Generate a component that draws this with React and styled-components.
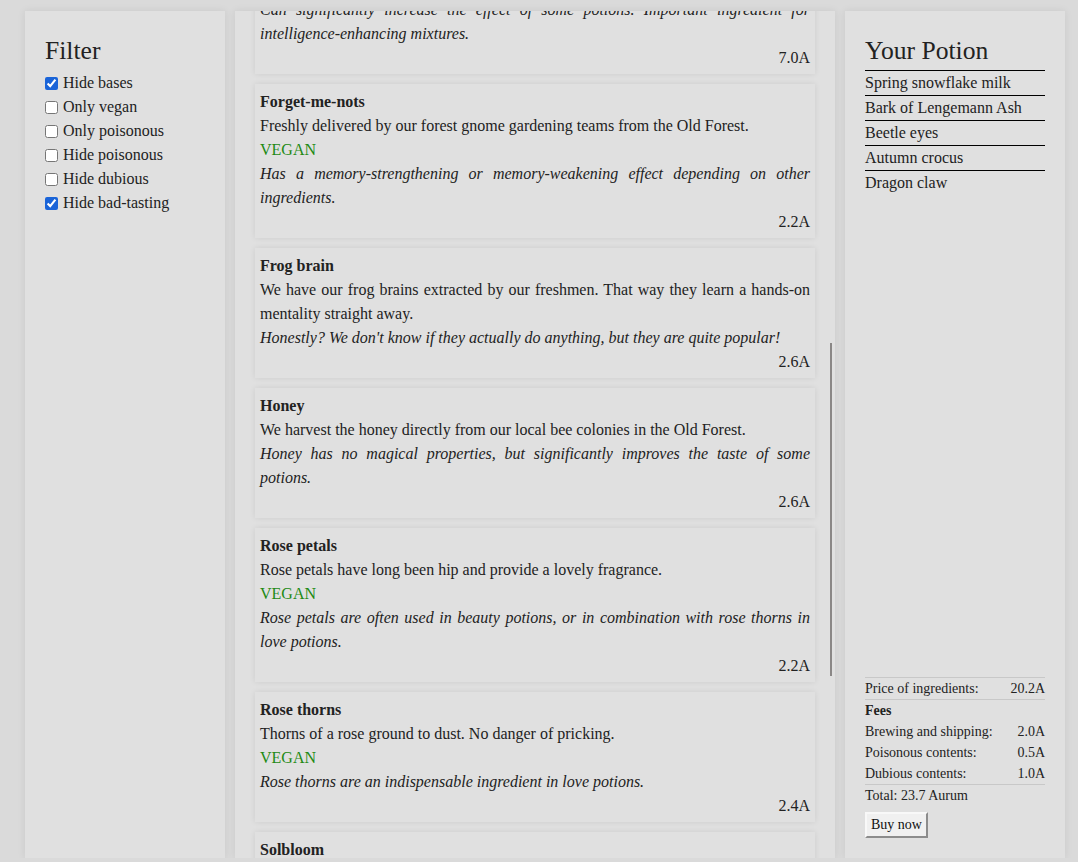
import React, { useLayoutEffect, useRef } from 'react'
import styled, { createGlobalStyle } from 'styled-components'

const GlobalStyle = createGlobalStyle`
  html, body {
    margin: 0;
    background: #dadada;
    font-family: "Liberation Serif", "Times New Roman", serif;
    color: #222;
  }
`

const Page = styled.div`
  display: grid;
  grid-template-columns: 200px 600px 220px;
  column-gap: 10px;
  padding: 11px 0 0 25px;
  height: 847px;
`
const Panel = styled.div`
  background: #e0e0e0;
  box-shadow: 0 0 8px rgba(0, 0, 0, 0.08);
  padding: 20px;
  box-sizing: border-box;
  height: 847px;
  display: flex;
  flex-direction: column;
`
const Heading = styled.h2`
  font-size: 25.6px;
  font-weight: normal;
  line-height: 30px;
  margin: 5px 0 4px 0;
`
const FilterList = styled.div`
  display: flex;
  flex-direction: column;
  padding-top: 1px;
`
const FilterLabel = styled.label`
  display: flex;
  align-items: center;
  font-size: 16px;
  line-height: 24px;

  input {
    width: 13px;
    height: 13px;
    margin: 0 5px 0 0;
    accent-color: #1a64d8;
  }
`

const ListPanel = styled.div`
  position: relative;
  background: #e0e0e0;
  box-shadow: 0 0 8px rgba(0, 0, 0, 0.08);
  height: 847px;
  overflow: hidden;
`
const Scroller = styled.div`
  height: 100%;
  overflow-y: scroll;
  scrollbar-width: none;
  padding: 10px 20px;
  box-sizing: border-box;
  display: flex;
  flex-direction: column;
  gap: 10px;

  &::-webkit-scrollbar {
    display: none;
  }
`
const ScrollThumb = styled.div`
  position: absolute;
  right: 3px;
  top: 332px;
  width: 2px;
  height: 333px;
  background: #8a8786;
`
const Card = styled.div`
  background: #e0e0e0;
  box-shadow: 0 0 6px rgba(0, 0, 0, 0.09);
  padding: 6px 5px 4px 5px;
  font-size: 16px;
  line-height: 24px;
  flex-shrink: 0;
`
const CardTitle = styled.div`
  font-weight: bold;
`
const CardText = styled.div`
  text-align: justify;
  font-style: ${(p) => (p.italic ? 'italic' : 'normal')};
`
const Vegan = styled.div`
  color: #1d8a14;
`
const Price = styled.div`
  text-align: right;
`

const PotionList = styled.div`
  display: flex;
  flex-direction: column;
`
const PotionItem = styled.div`
  font-size: 16px;
  line-height: 24px;
  border-top: 1px solid #000;
`
const Summary = styled.div`
  margin-top: auto;
  font-size: 14px;
  line-height: 21px;
`
const SummaryRow = styled.div`
  display: flex;
  justify-content: space-between;
  border-top: ${(p) => (p.divided ? '1px solid #c8c8c8' : 'none')};
  font-weight: ${(p) => (p.bold ? 'bold' : 'normal')};
`
const BuyButton = styled.button`
  margin-top: 6px;
  font-family: inherit;
  font-size: 14px;
  line-height: 16px;
  padding: 3px 4px;
  color: #111;
  background: #f0f0f0;
  border: 2px solid;
  border-color: #f8f8f8 #8c8c8c #8c8c8c #f8f8f8;
  border-radius: 0;
`

const filters = [
  { label: 'Hide bases', checked: true },
  { label: 'Only vegan', checked: false },
  { label: 'Only poisonous', checked: false },
  { label: 'Hide poisonous', checked: false },
  { label: 'Hide dubious', checked: false },
  { label: 'Hide bad-tasting', checked: true },
]

const ingredients = [
  {
    name: 'Dragon claw',
    text: 'Shed naturally by the dragons of the northern mountains.',
    note: 'Can significantly increase the effect of some potions. Important ingredient for intelligence-enhancing mixtures.',
    price: '7.0A',
  },
  {
    name: 'Forget-me-nots',
    text: 'Freshly delivered by our forest gnome gardening teams from the Old Forest.',
    vegan: true,
    note: 'Has a memory-strengthening or memory-weakening effect depending on other ingredients.',
    price: '2.2A',
  },
  {
    name: 'Frog brain',
    text: 'We have our frog brains extracted by our freshmen. That way they learn a hands-on mentality straight away.',
    note: "Honestly? We don't know if they actually do anything, but they are quite popular!",
    price: '2.6A',
  },
  {
    name: 'Honey',
    text: 'We harvest the honey directly from our local bee colonies in the Old Forest.',
    note: 'Honey has no magical properties, but significantly improves the taste of some potions.',
    price: '2.6A',
  },
  {
    name: 'Rose petals',
    text: 'Rose petals have long been hip and provide a lovely fragrance.',
    vegan: true,
    note: 'Rose petals are often used in beauty potions, or in combination with rose thorns in love potions.',
    price: '2.2A',
  },
  {
    name: 'Rose thorns',
    text: 'Thorns of a rose ground to dust. No danger of pricking.',
    vegan: true,
    note: 'Rose thorns are an indispensable ingredient in love potions.',
    price: '2.4A',
  },
  {
    name: 'Solbloom',
    text: 'A flower that only opens in the midday sun of the southern plains.',
    vegan: true,
    note: 'Brings warmth and light to any potion.',
    price: '3.1A',
  },
]

const potion = ['Spring snowflake milk', 'Bark of Lengemann Ash', 'Beetle eyes', 'Autumn crocus', 'Dragon claw']

const fees = [
  ['Brewing and shipping:', '2.0A'],
  ['Poisonous contents:', '0.5A'],
  ['Dubious contents:', '1.0A'],
]

function IngredientList() {
  const scroller = useRef(null)

  useLayoutEffect(() => {
    if (scroller.current) scroller.current.scrollTop = 77
  }, [])

  return (
    <ListPanel>
      <Scroller ref={scroller}>
        {ingredients.map((item) => (
          <Card key={item.name}>
            <CardTitle>{item.name}</CardTitle>
            <CardText>{item.text}</CardText>
            {item.vegan && <Vegan>VEGAN</Vegan>}
            <CardText italic>{item.note}</CardText>
            <Price>{item.price}</Price>
          </Card>
        ))}
      </Scroller>
      <ScrollThumb />
    </ListPanel>
  )
}

export default function App() {
  return (
    <>
      <GlobalStyle />
      <Page>
        <Panel>
          <Heading>Filter</Heading>
          <FilterList>
            {filters.map((f) => (
              <FilterLabel key={f.label}>
                <input type="checkbox" defaultChecked={f.checked} />
                {f.label}
              </FilterLabel>
            ))}
          </FilterList>
        </Panel>

        <IngredientList />

        <Panel>
          <Heading>Your Potion</Heading>
          <PotionList>
            {potion.map((name) => (
              <PotionItem key={name}>{name}</PotionItem>
            ))}
          </PotionList>
          <Summary>
            <SummaryRow divided>
              <span>Price of ingredients:</span>
              <span>20.2A</span>
            </SummaryRow>
            <SummaryRow divided bold>Fees</SummaryRow>
            {fees.map(([label, value]) => (
              <SummaryRow key={label}>
                <span>{label}</span>
                <span>{value}</span>
              </SummaryRow>
            ))}
            <SummaryRow divided>Total: 23.7 Aurum</SummaryRow>
            <BuyButton>Buy now</BuyButton>
          </Summary>
        </Panel>
      </Page>
    </>
  )
}
